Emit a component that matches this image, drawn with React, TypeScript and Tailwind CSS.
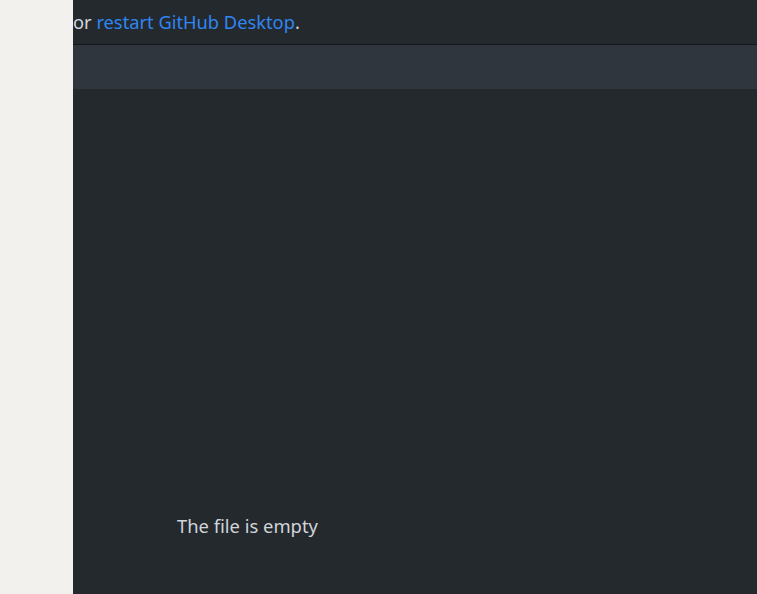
import React from 'react';

const App = () => {
  return (
    <div className="flex h-[594px] w-[757px] overflow-hidden bg-[#24292e] font-['Segoe_UI','Noto_Sans',sans-serif]">
      <div className="w-[73px] shrink-0 bg-[#f2f1ed]" />
      <div className="flex min-w-0 flex-1 flex-col">
        <div className="flex h-[45px] items-center border-b border-[#141619] bg-[#24292e] pb-[1px] text-[18.3px] text-[#d1d5da]">
          <span className="whitespace-nowrap">
            or <a className="text-[#2f86f2]">restart GitHub Desktop</a>.
          </span>
        </div>
        <div className="h-[44px] bg-[#2f363e]" />
        <div className="flex flex-1 flex-col">
          <div className="flex-1" />
          <div className="flex h-[92px] items-start pl-[104px] pt-[10px] text-[18.4px] text-[#d1d5da]">
            The file is empty
          </div>
        </div>
      </div>
    </div>
  );
};

export default App;
